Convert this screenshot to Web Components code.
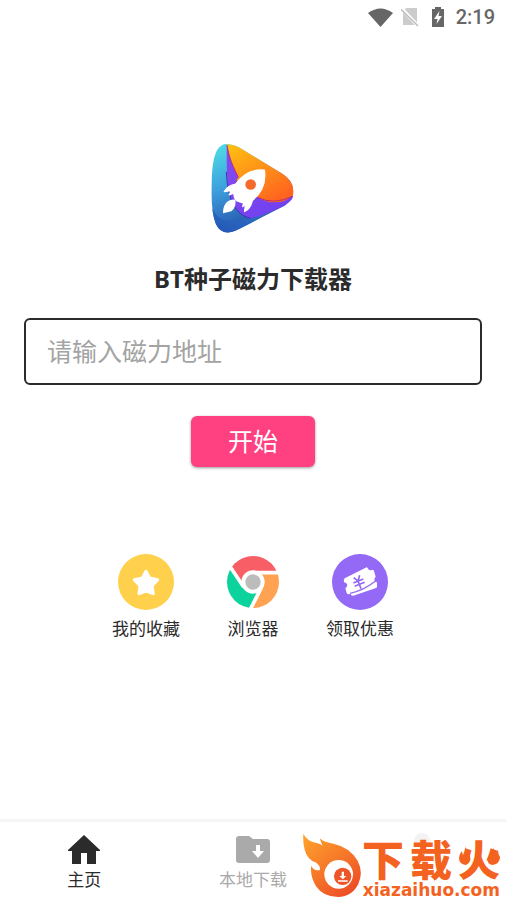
<!DOCTYPE html>
<html lang="zh-CN">
<head>
<meta charset="utf-8">
<meta name="viewport" content="width=device-width, initial-scale=1">
<title>BT种子磁力下载器</title>
<style>
  body { margin: 0; background: #fff; color: #2b2b2b; font-family: Roboto, "Noto Sans CJK SC", sans-serif; }
</style>
</head>
<body>
<downloader-app></downloader-app>
<script>
const define = (name, html) => {
  const template = document.createElement('template');
  template.innerHTML = html;
  customElements.define(name, class extends HTMLElement {
    constructor() {
      super();
      this.attachShadow({ mode: 'open' }).append(template.content.cloneNode(true));
    }
  });
};

define('status-bar', `
<style>
  :host { display: flex; align-items: center; justify-content: flex-end; height: 34px; padding-right: 11px; color: #666; }
  svg { display: block; }
  .wifi { margin-right: 8px; }
  .sim { margin-right: 12px; }
  .battery { margin-right: 11px; }
  time { font-size: 20px; line-height: 34px; font-weight: 500; }
</style>
<svg class="wifi" width="25" height="19" viewBox="0 0 25 19" fill="#666"><path d="M0 5Q12.500-4 25 5L12.500 19Z"/></svg>
<svg class="sim" width="18" height="20" viewBox="0 0 18 20"><path d="M5 1H16V18H2V5Z" fill="#ccc"/><path d="M1 2L18 20" stroke="#fff" stroke-width="3.500"/><path d="M0 2.500L17 19" stroke="#bbb" stroke-width="1.500"/></svg>
<svg class="battery" width="14" height="20" viewBox="0 0 14 20"><path d="M1 2H4V0H10V2H13V20H1Z" fill="#666"/><path d="M8.500 4L3 12H6.500L5.500 17L11 9H7.500Z" fill="#fff"/></svg>
<time>2:19</time>`);

define('rocket-logo', `
<style>:host { display: block; } svg { display: block; }</style>
<svg width="86" height="91" viewBox="30 24 258 272">
  <defs>
    <linearGradient id="b" x1="0" y1="0" x2="0.300" y2="1"><stop stop-color="#4fe0e6"/><stop offset=".5" stop-color="#3d9fdc"/><stop offset="1" stop-color="#2550aa"/></linearGradient>
    <linearGradient id="o" x1="0" y1="0" x2=".7" y2="1"><stop stop-color="#ffc310"/><stop offset="1" stop-color="#ff641f"/></linearGradient>
    <linearGradient id="p" x1="0" y1="0" x2=".7" y2="1"><stop stop-color="#8c4df0"/><stop offset="1" stop-color="#7040ef"/></linearGradient>
    <linearGradient id="d" x1="0" y1="1" x2="1" y2="0"><stop stop-color="#2457b5"/><stop offset="1" stop-color="#2d72c8"/></linearGradient>
  </defs>
  <path d="M80 27Q98 26 119 38L247 116Q281 138 279 167Q279 191 255 211L106 287Q65 303 48 267Q33 232 35 157Q34 45 66 30Q73 26 80 27Z" fill="url(#b)"/>
  <path d="M37 220C60 270 105 260 149 249L204 231Q180 252 106 287Q65 303 48 267Q40 248 37 220Z" fill="url(#d)"/>
  <path d="M80 30C80 125 76 235 151 249Q183 244 228 223Q277 202 279 183Q225 174 175 187Z" fill="url(#p)"/>
  <path d="M79 110C83 190 104 239 151 249" fill="none" stroke="#3f31ae" stroke-width="3"/>
  <path d="M80 28Q98 26 119 38L247 116Q286 140 279 180Q255 205 211 201Q177 194 156 171Q112 160 98 106Z" fill="url(#o)"/>
  <path d="M81 30C87 66 97 91 115 126L100 150L84 120Z" fill="#8147ee"/>
  <path d="M81 30C87 66 97 91 115 126M174 187Q220 211 279 183" fill="none" stroke="#bd2b79" stroke-width="3"/>
  <path d="M193 105C154 101 125 122 107 147Q84 151 73 169L94 166L88 179L102 173Q101 190 111 197L131 204L128 214L136 208L134 229Q151 221 157 196C178 177 200 152 193 105Z" fill="#fff" stroke="#fff" stroke-width="4" stroke-linejoin="round"/>
  <path d="M106 193C79 192 69 210 69 234Q82 231 94 228Q110 216 106 193Z" fill="#fff"/>
  <circle cx="152" cy="148" r="16" fill="#f36a2c"/>
</svg>`);

define('magnet-form', `
<style>
  :host { display: block; align-self: stretch; }
  form { display: flex; flex-direction: column; align-items: center; gap: 31px; }
  input { box-sizing: border-box; width: 100%; height: 67px; padding: 2px 21px 0; border: 2px solid #2b2b2b; border-radius: 6px; background: #fff; color: #2b2b2b; font: inherit; font-size: 25px; outline: 0; }
  input::placeholder { color: #a3a3a3; opacity: 1; }
  button { height: 51px; padding: 2px 37px 0; border: 0; border-radius: 6px; background: #ff4081; color: #fff; font: inherit; font-size: 25px; line-height: 49px; box-shadow: 0 1px 3px #0006; }
</style>
<form onsubmit="return false">
  <input type="text" aria-label="磁力地址" placeholder="请输入磁力地址">
  <button type="submit">开始</button>
</form>`);

define('quick-link', `
<style>
  :host { display: block; }
  a { display: flex; flex-direction: column; align-items: center; gap: 7px; color: inherit; text-decoration: none; font-size: 17px; line-height: 25px; }
  ::slotted(svg) { display: block; width: 56px; height: 56px; }
</style>
<a href="#"><slot name="icon"></slot><slot></slot></a>`);

define('nav-tab', `
<style>
  :host { display: block; flex: 1 1 0; color: #aaa; }
  :host([active]) { color: #2b2b2b; }
  button { display: flex; flex-direction: column; align-items: center; width: 100%; min-height: 78px; padding: 10px 0 0; border: 0; background: none; color: inherit; font: inherit; font-size: 17px; line-height: 25px; }
  ::slotted(svg) { display: block; width: 36px; height: 36px; }
</style>
<button type="button"><slot name="icon"></slot><slot></slot></button>`);

define('site-mark', `
<style>
  :host { display: flex; align-items: flex-end; gap: 1px; color: #f4621f; }
  svg { display: block; }
  .words { display: flex; flex-direction: column; align-items: flex-end; }
  .name { display: flex; gap: 6px; font-size: 42px; line-height: 42px; font-weight: 900; }
  .fire { position: relative; }
  .fire svg { position: absolute; inset: 0; width: 100%; height: 100%; }
  .url { font: bold 17px/15px "DejaVu Sans", sans-serif; }
</style>
<svg width="58" height="64" viewBox="14 72 174 192">
  <defs><linearGradient id="f" x1="0" y1="0" x2=".7" y2="1"><stop stop-color="#ffa42b"/><stop offset=".6" stop-color="#f57429"/><stop offset="1" stop-color="#ee4f25"/></linearGradient></defs>
  <path d="M15 72Q28 95 52 98Q70 102 73 109Q68 97 64 85Q78 98 105 101Q153 111 178 152Q196 187 180 222Q161 260 119 261Q75 261 53 229Q34 197 39 167Q44 182 64 181Q68 169 54 158Q27 150 19 119Q13 96 15 72Z" fill="url(#f)"/>
  <circle cx="121" cy="193" r="43" fill="#fff"/><circle cx="133" cy="199" r="26" fill="#ee5527"/>
  <path d="M130 185H137V198H144L133.500 208L123 198H130ZM119 211H148V215H119Z" fill="#fff"/>
</svg>
<div class="words"><span class="name"><span>下</span><span>载</span><span class="fire">火<svg viewBox="0 0 42 42" fill="currentColor"><path d="M8 3Q7 9 11 13Q15 20 8 24Q1 23 1 17Q1 13 4 10L5 15Q8 9 8 3ZM37 3Q35 9 37 13L40 9Q40 13 42 16Q42 23 34 24Q29 23 30 18L32 14L34 16Q35 9 37 3Z"/></svg></span></span><span class="url">xiazaihuo.com</span></div>`);

define('downloader-app', `
<style>
  :host { display: flex; flex-direction: column; min-height: 100vh; }
  main { flex: 1; display: flex; flex-direction: column; align-items: center; padding: 109px 24px 24px; }
  h1 { margin: 26px 0 21px; font-family: "Noto Sans", "Noto Sans CJK SC", sans-serif; font-size: 24px; line-height: 37px; font-weight: 700; }
  .links { display: flex; justify-content: center; gap: 39px; margin-top: 87px; }
  .links quick-link { min-width: 68px; }
  footer { position: relative; border-top: 3px solid #f5f5f5; }
  nav { display: flex; }
  site-mark { position: absolute; right: 6px; bottom: 2px; }
</style>
<status-bar></status-bar>
<main>
  <rocket-logo></rocket-logo>
  <h1>BT种子磁力下载器</h1>
  <magnet-form></magnet-form>
  <div class="links">
    <quick-link>
      <svg slot="icon" viewBox="0 0 168 168"><circle cx="84" cy="84" r="84" fill="#ffd04b"/><path d="M84 52L95 72L119 77L102 96L106 119L84 111L63 119L66 96L49 77L73 72Z" fill="#fff" stroke="#fff" stroke-width="9" stroke-linejoin="round"/></svg>我的收藏
    </quick-link>
    <quick-link>
      <svg slot="icon" viewBox="0 0 168 168">
        <defs><clipPath id="disc"><circle cx="84" cy="84" r="78"/></clipPath></defs>
        <g clip-path="url(#disc)"><path d="M84 84L56 99L10 30V-10H190V56Z" fill="#f85e66"/><path d="M84 56H190V190H64L110 99Z" fill="#ffa352"/><path d="M84 84L56 99L10 30L-20 70V180H70L110 99Z" fill="#0cd39b"/></g>
        <path d="M84 56H168M56 99L10 30M110 99L74 170" stroke="#fff" stroke-width="11"/><circle cx="84" cy="84" r="29" fill="#bcbcbc" stroke="#fff" stroke-width="12"/>
      </svg>浏览器
    </quick-link>
    <quick-link>
      <svg slot="icon" viewBox="0 0 168 168"><circle cx="84" cy="84" r="84" fill="#9369f5"/><path d="M38 73L101 41Q105 38 107 43Q111 51 120 48Q124 46 126 51L131 68Q125 73 128 81Q130 85 135 85V99Q134 102 130 103L64 125Q58 127 55 119L49 121Q46 121 44 117L40 103Q48 96 45 90Q42 86 36 85Q34 77 38 73Z" fill="#fff"/><path d="M54 118Q91 112 134 79" fill="none" stroke="#9369f5" stroke-width="4"/><path d="M65 71L78 81L83 64M64 87L94 75M68 97L98 85M78 81L87 104" fill="none" stroke="#9369f5" stroke-width="5"/></svg>领取优惠
    </quick-link>
  </div>
</main>
<footer>
  <nav>
    <nav-tab active><svg slot="icon" viewBox="0 0 36 36"><path d="M18 3L34 18V19H30V32H21V21H15V32H6V19H2V18Z" fill="currentColor"/></svg>主页</nav-tab>
    <nav-tab><svg slot="icon" viewBox="0 0 36 36"><path d="M4 4H14L18 7H32Q35 7 35 10V28Q35 31 32 31H4Q1 31 1 28V7Q1 4 4 4Z" fill="currentColor"/><path d="M21 13H25V19H29L23 26L17 19H21Z" fill="#fff"/></svg>本地下载</nav-tab>
    <nav-tab><svg slot="icon" viewBox="0 0 36 36"><circle cx="18" cy="9" r="8" fill="#f3f3f3"/></svg></nav-tab>
  </nav>
  <site-mark></site-mark>
</footer>`);
</script>
</body>
</html>
